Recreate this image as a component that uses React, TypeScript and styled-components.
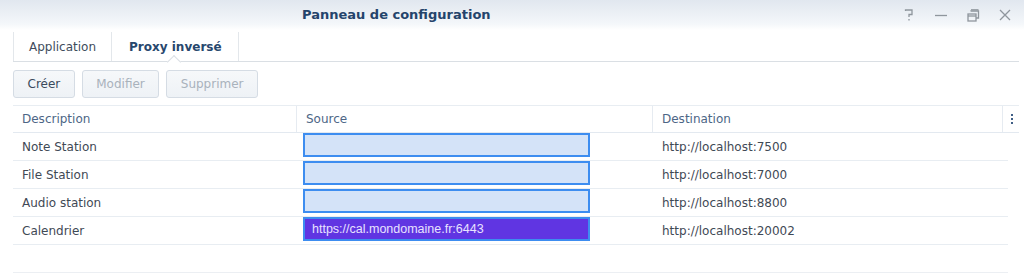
import React from "react";
import styled, { createGlobalStyle } from "styled-components";

const Global = createGlobalStyle`
  html, body { margin: 0; padding: 0; background: #ffffff; }
  body { font-family: "DejaVu Sans", Verdana, sans-serif; font-size: 12px; color: #404a56; }
  * { box-sizing: border-box; }
`;

const Window = styled.div`
  width: 1024px;
  height: 278px;
  background: #fff;
  overflow: hidden;
`;

const TitleBar = styled.div`
  height: 30px;
  display: flex;
  align-items: center;
  background: linear-gradient(#e1e7ef, #f4f7fa 80%, #ffffff);
  padding-left: 302px;
  padding-right: 10px;
`;

const Title = styled.div`
  font-weight: bold;
  font-size: 13px;
  color: #24446b;
  flex: 1;
  margin-top: -2px;
`;

const Controls = styled.div`
  display: flex;
  align-items: center;
  gap: 14px;
  color: #8f969d;
`;

const CtrlIcon = styled.svg`
  width: 18px;
  height: 18px;
  display: block;
`;

const Body = styled.div`
  padding: 0 5px 0 13px;
`;

const Tabs = styled.div`
  display: flex;
  height: 32px;
  padding-top: 1px;
  border-bottom: 1px solid #dadfe4;
`;

const Tab = styled.div<{ $active?: boolean; $first?: boolean }>`
  position: relative;
  display: flex;
  align-items: center;
  padding: 0 ${(p) => (p.$active ? "16px 0 17px" : "15px")};
  height: 29px;
  margin-top: 1px;
  border-left: ${(p) => (p.$first ? "1px solid #e3e7eb" : "none")};
  border-right: 1px solid #e3e7eb;
  font-size: 12px;
  font-weight: ${(p) => (p.$active ? "bold" : "normal")};
  color: ${(p) => (p.$active ? "#27476d" : "#3e4c5c")};
  ${(p) =>
    p.$active
      ? `
    &::after {
      content: "";
      position: absolute;
      left: 57px;
      bottom: -6px;
      width: 9px;
      height: 9px;
      background: #fff;
      border-left: 1px solid #dadfe4;
      border-top: 1px solid #dadfe4;
      transform: rotate(45deg);
    }
  `
      : ""}
`;

const Toolbar = styled.div`
  display: flex;
  gap: 7px;
  margin-top: 8px;
`;

const Button = styled.div<{ $disabled?: boolean }>`
  height: 28px;
  padding: 0 13.5px;
  display: flex;
  align-items: center;
  border: 1px solid #d5dce4;
  border-radius: 3px;
  background: linear-gradient(#f6f8fa, #eef2f6);
  font-size: 12px;
  color: ${(p) => (p.$disabled ? "#a9b2bc" : "#3b4a5c")};
`;

const Table = styled.div`
  margin-top: 7px;
  border-top: 1px solid #e8edf2;
`;

const HeaderRow = styled.div`
  display: grid;
  grid-template-columns: 284px 356px 350px 16px;
  height: 27px;
  border-bottom: 1px solid #e3e9f0;
`;

const HeadCell = styled.div<{ $last?: boolean }>`
  display: flex;
  align-items: center;
  padding-left: 9px;
  color: #4d6686;
  font-size: 12px;
  border-right: ${(p) => (p.$last ? "none" : "1px solid #e6ebf1")};
`;

const MenuCell = styled.div`
  display: flex;
  align-items: center;
  justify-content: center;
  padding-left: 2px;
`;

const Row = styled.div`
  display: grid;
  grid-template-columns: 284px 356px 355px;
  width: 995px;
  height: 28px;
  border-bottom: 1px solid #e8edf2;
`;

const Cell = styled.div`
  display: flex;
  align-items: center;
  padding-left: 9px;
  font-size: 12px;
  color: #3f4955;
`;

const SourceCell = styled.div`
  display: flex;
  align-items: flex-start;
  padding-left: 6px;
`;

const Field = styled.div<{ $selected?: boolean }>`
  width: 287px;
  height: 24px;
  border: 2px solid #3d8df0;
  background: ${(p) => (p.$selected ? "#6035e2" : "#d4e3f8")};
  color: #e8e2ff;
  font-family: "Liberation Sans", Arial, sans-serif;
  font-size: 12.5px;
  display: flex;
  align-items: center;
  padding-left: 7px;
`;

const Spacer = styled.div`
  width: 995px;
  height: 28px;
  border-bottom: 1px solid #eceff3;
`;

const rows = [
  { d: "Note Station", s: "", t: "http://localhost:7500" },
  { d: "File Station", s: "", t: "http://localhost:7000" },
  { d: "Audio station", s: "", t: "http://localhost:8800" },
  { d: "Calendrier", s: "https://cal.mondomaine.fr:6443", t: "http://localhost:20002", sel: true },
];

export default function App() {
  return (
    <Window>
      <Global />
      <TitleBar>
        <Title>Panneau de configuration</Title>
        <Controls>
          <CtrlIcon viewBox="0 0 18 18" fill="none" stroke="currentColor" strokeWidth="1.3">
            <path d="M5.5 5 L5.5 4 H12 V8.5 H9 V11" />
            <path d="M9 13 L9 14.5" />
          </CtrlIcon>
          <CtrlIcon viewBox="0 0 18 18" fill="none" stroke="currentColor" strokeWidth="1.3">
            <path d="M3 9.5 H15" />
          </CtrlIcon>
          <CtrlIcon viewBox="0 0 18 18" fill="none" stroke="currentColor" strokeWidth="1.3">
            <rect x="4" y="8" width="8" height="7" />
            <path d="M4 10 H12" />
            <path d="M7 5.5 V5 H14.5 V12 H12" />
            <path d="M7 3.8 H14.5" />
          </CtrlIcon>
          <CtrlIcon viewBox="0 0 18 18" fill="none" stroke="currentColor" strokeWidth="1.3">
            <path d="M4 4 L14 14 M14 4 L4 14" />
          </CtrlIcon>
        </Controls>
      </TitleBar>
      <Body>
        <Tabs>
          <Tab $first>Application</Tab>
          <Tab $active>Proxy inversé</Tab>
        </Tabs>
        <Toolbar>
          <Button>Créer</Button>
          <Button $disabled>Modifier</Button>
          <Button $disabled>Supprimer</Button>
        </Toolbar>
        <Table>
          <HeaderRow>
            <HeadCell>Description</HeadCell>
            <HeadCell>Source</HeadCell>
            <HeadCell>Destination</HeadCell>
            <MenuCell>
              <svg width="4" height="10" viewBox="0 0 4 10">
                <rect x="1" y="0" width="2" height="2" fill="#3f5f86" />
                <rect x="1" y="4" width="2" height="2" fill="#3f5f86" />
                <rect x="1" y="8" width="2" height="2" fill="#3f5f86" />
              </svg>
            </MenuCell>
          </HeaderRow>
          {rows.map((r) => (
            <Row key={r.d}>
              <Cell>{r.d}</Cell>
              <SourceCell>
                <Field $selected={r.sel}>{r.s}</Field>
              </SourceCell>
              <Cell>{r.t}</Cell>
            </Row>
          ))}
          <Spacer />
        </Table>
      </Body>
    </Window>
  );
}
